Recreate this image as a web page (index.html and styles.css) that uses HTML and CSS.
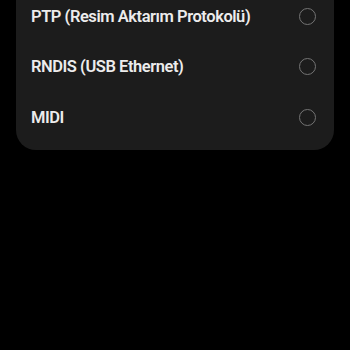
FILE: index.html
```html
<!DOCTYPE html>
<html lang="tr">
<head>
    <meta charset="UTF-8">
    <meta name="viewport" content="width=device-width, initial-scale=1.0">
    <title>USB</title>
    <link rel="stylesheet" href="styles.css">
</head>
<body>
    <div class="card">
        <div class="option">
            <span class="label">PTP (Resim Aktarım Protokolü)</span>
            <span class="radio"></span>
        </div>
        <div class="option">
            <span class="label">RNDIS (USB Ethernet)</span>
            <span class="radio"></span>
        </div>
        <div class="option">
            <span class="label">MIDI</span>
            <span class="radio"></span>
        </div>
    </div>
</body>
</html>
```

FILE: styles.css
```css
body {
    margin: 0;
    background: #000;
    font-family: Roboto, "Liberation Sans", sans-serif;
}

.card {
    margin: -34px 16px 0;
    padding: 25px 0 7px;
    background: #1c1c1c;
    border-radius: 0 0 20px 20px;
}

.option {
    display: flex;
    align-items: center;
    justify-content: space-between;
    height: 50.5px;
    padding: 0 18px 0 15px;
}

.label {
    color: #ececec;
    font-size: 16.5px;
    font-weight: 600;
    letter-spacing: -0.45px;
}

.radio {
    width: 15px;
    height: 15px;
    border: 1.5px solid #747474;
    border-radius: 50%;
}
```
